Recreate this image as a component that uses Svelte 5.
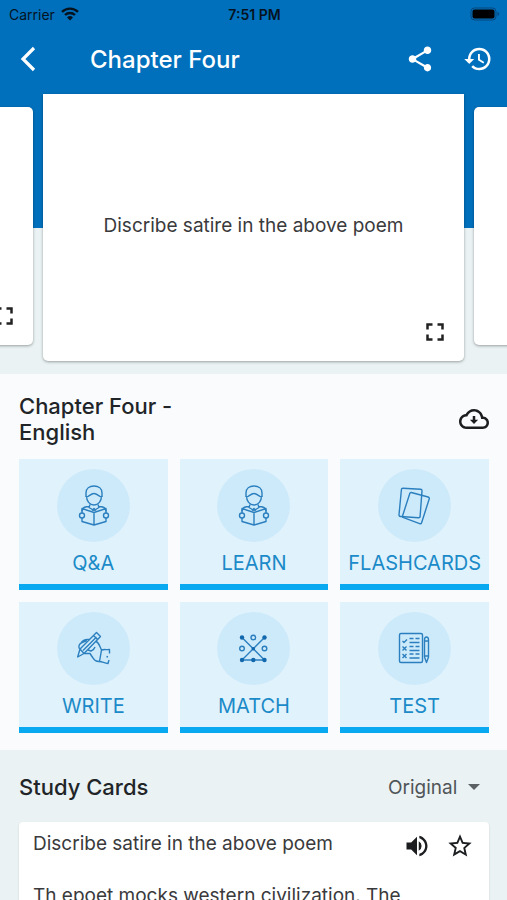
<script>
	const modes = [
		{ label: 'Q&A', icon: 'reader' },
		{ label: 'LEARN', icon: 'reader' },
		{ label: 'FLASHCARDS', icon: 'cards' },
		{ label: 'WRITE', icon: 'write' },
		{ label: 'MATCH', icon: 'match' },
		{ label: 'TEST', icon: 'test' },
	];

	const question = 'Discribe satire in the above poem';
	const slides = [
		{ text: '', side: true },
		{ text: question, side: false },
		{ text: '', side: true },
	];

	let order = $state('Original');
</script>

<div class="screen">
	<div class="top">
		<div class="status">
			<div class="carrier">
				<span>Carrier</span>
				<svg width="18" height="14" viewBox="0 0 18 14" fill="none" stroke="#06131f" stroke-width="2.4">
					<path d="M1 4.8a11.6 11.6 0 0 1 16 0" />
					<path d="M4 8a7.2 7.2 0 0 1 10 0" />
					<path d="M9 13.6 6 10.4a4.4 4.4 0 0 1 6 0z" fill="#06131f" stroke="none" />
				</svg>
			</div>
			<strong>7:51 PM</strong>
			<svg class="battery" width="30" height="14" viewBox="0 0 30 14">
				<rect x="1" y="1" width="25" height="12" rx="3.5" fill="none" stroke="#06467a" />
				<rect x="2.5" y="2.5" width="22" height="9" rx="2" fill="#000" />
				<path d="M27.5 5v4q1.6-.6 1.6-2t-1.6-2z" fill="#06467a" />
			</svg>
		</div>
		<header>
			<button class="back" aria-label="Back">
				<svg width="16" height="26" viewBox="0 0 16 26" fill="none" stroke="#fff" stroke-width="3.2">
					<path d="M14 2 3 13l11 11" />
				</svg>
			</button>
			<h1>Chapter Four</h1>
			<button aria-label="Share">
				<svg width="30" height="30" viewBox="0 0 24 24" fill="#fff">
					<path d="M18 16.08c-.76 0-1.44.3-1.96.77L8.91 12.7c.05-.23.09-.46.09-.7s-.04-.47-.09-.7l7.05-4.11c.54.5 1.25.81 2.04.81 1.66 0 3-1.34 3-3s-1.34-3-3-3-3 1.34-3 3c0 .24.04.47.09.7L8.04 9.81C7.5 9.31 6.79 9 6 9c-1.66 0-3 1.34-3 3s1.34 3 3 3c.79 0 1.5-.31 2.04-.81l7.12 4.16c-.05.21-.08.43-.08.65 0 1.61 1.31 2.92 2.92 2.92s2.92-1.31 2.92-2.92-1.31-2.92-2.92-2.92z" />
				</svg>
			</button>
			<button aria-label="History">
				<svg width="30" height="30" viewBox="0 0 24 24" fill="#fff">
					<path d="M13 3a9 9 0 0 0-9 9H1l3.89 3.89.07.14L9 12H6c0-3.87 3.13-7 7-7s7 3.13 7 7-3.13 7-7 7c-1.93 0-3.68-.79-4.94-2.06l-1.42 1.42A8.954 8.954 0 0 0 13 21a9 9 0 0 0 0-18zm-1 5v5l4.28 2.54.72-1.21-3.5-2.08V8H12z" />
				</svg>
			</button>
		</header>
	</div>

	<div class="carousel">
		{#each slides as slide}
			<article class="slide" class:side={slide.side}>
				<p>{slide.text}</p>
				<button aria-label="Full screen">
					<svg width="30" height="30" viewBox="0 0 24 24" fill="#222">
						<path d="M7 14H5v5h5v-2H7v-3zm-2-4h2V7h3V5H5v5zm12 7h-3v2h5v-5h-2v3zM14 5v2h3v3h2V5h-5z" />
					</svg>
				</button>
			</article>
		{/each}
	</div>

	<section class="modes">
		<div class="chapter">
			<h2>Chapter Four -<br />English</h2>
			<button aria-label="Download">
				<svg width="30" height="30" viewBox="0 0 24 24" fill="#1b1d1f">
					<path d="M19.35 10.04C18.67 6.59 15.64 4 12 4 9.11 4 6.6 5.64 5.35 8.04 2.34 8.36 0 10.91 0 14c0 3.31 2.69 6 6 6h13c2.76 0 5-2.24 5-5 0-2.64-2.05-4.78-4.65-4.96zM19 18H6c-2.21 0-4-1.79-4-4 0-2.05 1.53-3.76 3.56-3.97l1.07-.11.5-.95C8.08 7.14 9.94 6 12 6c2.62 0 4.88 1.86 5.39 4.43l.3 1.5 1.53.11c1.56.1 2.78 1.41 2.78 2.96 0 1.65-1.35 3-3 3z" />
					<path d="M11 9.5h2v3h2.3L12 16l-3.3-3.5H11z" />
				</svg>
			</button>
		</div>

		<div class="grid">
			{#each modes as mode}
				<button class="tile">
					<svg class="round" width="73" height="73" viewBox="0 0 73 73">
						<circle class="disc" cx="36.5" cy="36.5" r="36.5" />
						{#if mode.icon === 'reader'}
							<path d="M29 28v-4c0-4.500 3.500-7 8-7s8 2.500 8 7v4" />
							<path d="M29 28c3 0 4.500-3.500 8-3.500S42 28 45 28M29.500 27c0 5 3 9 7.500 9s7.500-4 7.500-9" />
							<path d="M33 35.500l-1 3 5 3 5-3-1-3M32 37.500c-4 0-7 1.500-7 5M42 37.500c4 0 7 1.500 7 5" />
							<path d="M37 43.500l-12-4v13l12 3.500 12-3.500v-13zM37 43.500v12.500M35 41.500l2-2 2 2" />
							<circle class="hand" cx="25" cy="46.5" r="2.5" />
							<circle class="hand" cx="49" cy="46.5" r="2.5" />
						{:else if mode.icon === 'cards'}
							<path d="M25 19.3l17.5.9q1.6.1 1.5 1.7l-1.9 25.5q-.1 1.5-1.6 1.4L22.500 47.5q-1.600-.1-1.500-1.700l2.400-25q.1-1.600 1.600-1.500z" />
							<path d="M33.3 23.500l16.800 4.500q1.600.5 1.100 2l-7.600 23.700q-.5 1.500-2 1l-16-6q-1.500-.5-1-2l7.100-21.900q.4-1.600 1.600-1.300z" />
						{:else if mode.icon === 'write'}
							<path d="M20.700 45l2.300-8L39.500 20.500l4 4L27 41.500zM23 37l4 4.500M36.500 23.500l4 4M26 38.500L39.500 25" />
							<path d="M22.500 37c-1.500-3 0-5.500 2.500-6.500l5-2M24 31c2-3.500 5-4 8.500-3.500M39 29.500c3.500 1 3.500 5.500 6 9M27 41.500h6l3 4.500q2.500 4 6.500 3.500" />
							<path d="M31 38l3 1q3-1 4-4" />
							<path d="M52.5 41.500V37.500c-3.500.5-5-.5-8 .5l-2 11.500c3 0 5 2 8.500 2l1-3.500M51 45l-1.500-.5" />
						{:else if mode.icon === 'match'}
							<path d="M25 25.500L47.500 48H25l22.500-22.500" />
							<circle cx="36.3" cy="25.5" r="2.3" />
							<circle cx="25" cy="36.5" r="2.3" />
							<circle cx="47.5" cy="36.5" r="2.3" />
							<g class="dots">
								<circle cx="25" cy="25.5" r="2.2" />
								<circle cx="47.5" cy="25.5" r="2.2" />
								<circle cx="36.3" cy="36.8" r="1.8" />
								<circle cx="25" cy="48" r="2.2" />
								<circle cx="36.3" cy="48" r="2.2" />
								<circle cx="47.5" cy="48" r="2.2" />
							</g>
						{:else}
							<rect x="21.5" y="21.5" width="23" height="29" rx="1.5" />
							<path d="M24.5 29l1.500 1.500 3-3M24.500 34.500l4 4m0-4l-4 4M24.500 42l4 4m0-4l-4 4" />
							<path d="M31.5 26.500h4m2 0h4M31.500 30.500h10M31.500 34.500h4m2 0h4M31.500 38.500h10M31.500 42h4m2 0h4M31.500 46h10" />
							<path d="M46.5 28q0-3 2-3t2 3v17l-2 5.500-2-5.500zM46.500 29h4M46.500 44h4" />
						{/if}
					</svg>
					<span>{mode.label}</span>
				</button>
			{/each}
		</div>
	</section>

	<section class="study">
		<div class="bar">
			<h2>Study Cards</h2>
			<label class="order">
				<select bind:value={order} aria-label="Card order">
					<option>Original</option>
				</select>
				<svg width="12" height="6" viewBox="0 0 12 6" fill="#5c6164"><path d="M0 0h12L6 6z" /></svg>
			</label>
		</div>
		<article class="card">
			<div class="term">
				<p>{question}</p>
				<button aria-label="Listen">
					<svg width="30" height="28" viewBox="0 0 24 24" fill="#1b1d1f">
						<path d="M3 9v6h4l5 5V4L7 9H3zm10.500-1v8a4.500 4.500 0 0 0 0-8zM14 3.230v2.060c2.890.86 5 3.540 5 6.710s-2.110 5.850-5 6.710v2.060c4.010-.91 7-4.490 7-8.770s-2.990-7.860-7-8.770z" />
					</svg>
				</button>
				<button aria-label="Add star">
					<svg width="28" height="28" viewBox="0 0 24 24" fill="#1b1d1f">
						<path d="M22 9.240l-7.190-.62L12 2 9.190 8.630 2 9.240l5.460 4.730L5.820 21 12 17.270 18.180 21l-1.630-7.030L22 9.240zM12 15.400l-3.760 2.270 1-4.280-3.320-2.880 4.380-.38L12 6.100l1.710 4.040 4.380.38-3.320 2.880 1 4.280L12 15.400z" />
					</svg>
				</button>
			</div>
			<p class="answer">Th epoet mocks western civilization. The</p>
		</article>
	</section>
</div>

<style>
:global(body) {
	margin: 0;
	background: #eaf2f4;
}

.screen {
	height: 100vh;
	overflow: hidden;
	background: #eaf2f4;
	color: #222527;
	font-family: Inter, 'Liberation Sans', sans-serif;
}

h1, h2, p {
	margin: 0;
	font-weight: 500;
}

button {
	display: flex;
	padding: 0;
	border: 0;
	background: none;
	font: inherit;
	cursor: pointer;
}

.top {
	background: #0070bc;
}

.status {
	display: grid;
	grid-template-columns: 1fr auto 1fr;
	align-items: center;
	height: 28px;
	padding: 0 7px 0 9px;
	font-size: 14px;
	color: #06131f;
}

.status strong {
	font-weight: 600;
}

.carrier {
	display: flex;
	align-items: center;
	gap: 6px;
}

.battery {
	justify-self: end;
}

header {
	display: flex;
	align-items: center;
	gap: 28px;
	height: 62px;
	padding: 0 14px 0 20px;
}

.back {
	margin-right: 26px;
}

h1 {
	flex: 1;
	font-size: 24px;
	color: #fff;
}

.carousel {
	display: flex;
	justify-content: center;
	align-items: flex-start;
	gap: 10px;
	padding: 4px 0 13px;
	overflow: hidden;
	background: linear-gradient(#0070bc 138px, #eaf2f4 138px);
}

.slide {
	display: flex;
	flex-direction: column;
	flex: 0 0 83%;
	box-sizing: border-box;
	height: 267px;
	padding: 14px;
	border-radius: 0 0 5px 5px;
	background: #fff;
	box-shadow: 0 1px 3px rgba(0, 0, 0, 0.35);
}

.slide.side {
	height: 238px;
	margin-top: 13px;
	border-radius: 5px;
}

.slide p {
	flex: 1;
	padding-top: 106px;
	text-align: center;
}

.slide button {
	align-self: flex-end;
}

.modes {
	padding: 19px 18px 17px 19px;
	background: #f9fbfd;
}

.chapter {
	display: flex;
	justify-content: space-between;
	align-items: center;
	margin-bottom: 14px;
}

h2 {
	font-size: 22px;
	line-height: 26px;
}

.grid {
	display: grid;
	grid-template-columns: repeat(3, 1fr);
	gap: 12px;
}

.tile {
	flex-direction: column;
	align-items: center;
	height: 131px;
	padding-top: 10px;
	border-bottom: 6px solid #08a9f1;
	background: #e0f2fb;
	color: #1b8ac8;
	font-size: 20px;
	line-height: 24px;
}

.tile span {
	margin-top: 9px;
}

.round {
	fill: none;
	stroke: #2b7fbe;
	stroke-width: 1.4;
	stroke-linejoin: round;
}

.disc {
	fill: #cdeafb;
	stroke: none;
}

.hand {
	fill: #cdeafb;
}

.dots {
	fill: #1268ad;
	stroke: none;
}

.study {
	padding: 24px 18px 0 19px;
}

.bar {
	display: flex;
	justify-content: space-between;
	align-items: center;
	margin-bottom: 22px;
}

.order {
	display: flex;
	align-items: center;
	gap: 10px;
	padding-right: 9px;
}

select {
	appearance: none;
	padding: 0;
	border: 0;
	background: none;
	font: inherit;
	font-size: 19px;
	color: #505558;
}

.card {
	padding: 10px 15px 24px 14px;
	border-radius: 4px;
	background: #fff;
	box-shadow: 0 1px 2px rgba(0, 0, 0, 0.15);
}

.term {
	display: flex;
	gap: 14px;
}

.term p {
	flex: 1;
}

.slide p, .card p {
	font-size: 19px;
	font-weight: 400;
	line-height: 24px;
	color: #3a3a3c;
}

.answer {
	margin-top: 24px;
}
</style>
